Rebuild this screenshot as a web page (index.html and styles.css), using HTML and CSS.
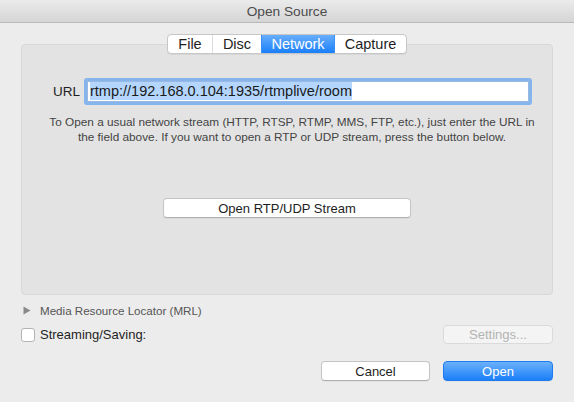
FILE: index.html
```html
<!DOCTYPE html>
<html>
<head>
<meta charset="utf-8">
<link rel="stylesheet" href="styles.css">
</head>
<body>
<div class="window">
  <div class="titlebar">Open Source</div>
  <div class="content">
    <div class="tabs">
      <div class="seg">
        <span class="tab t-file">File</span>
        <span class="tab t-disc">Disc</span>
        <span class="tab t-net active">Network</span>
        <span class="tab t-cap">Capture</span>
      </div>
    </div>
    <div class="panel">
      <div class="url-row">
        <span class="url-label">URL</span>
        <div class="url-field"><span class="sel">rtmp://192.168.0.104:1935/rtmplive/room</span></div>
      </div>
      <p class="desc">To Open a usual network stream (HTTP, RTSP, RTMP, MMS, FTP, etc.), just enter the URL in<br>the field above. If you want to open a RTP or UDP stream, press the button below.</p>
      <div class="rtp-row"><button class="btn rtp">Open RTP/UDP Stream</button></div>
    </div>
    <div class="mrl-row">
      <svg class="tri" width="8" height="9" viewBox="0 0 8 9"><path d="M0.5 0.5 L7.5 4.5 L0.5 8.5 Z" fill="#8a8a8a"/></svg>
      <span class="mrl">Media Resource Locator (MRL)</span>
    </div>
    <div class="stream-row">
      <label class="chk"><span class="box"></span><span>Streaming/Saving:</span></label>
      <button class="btn settings" disabled>Settings...</button>
    </div>
    <div class="actions">
      <button class="btn cancel">Cancel</button>
      <button class="btn open">Open</button>
    </div>
  </div>
</div>
</body>
</html>
```
FILE: styles.css
```css
* { box-sizing: border-box; }
html, body { margin: 0; padding: 0; }
body {
  width: 574px;
  height: 402px;
  overflow: hidden;
  background: #ececec;
  font-family: "Liberation Sans", Arial, sans-serif;
  color: #1e1e1e;
}
.window { width: 574px; height: 402px; display: flex; flex-direction: column; }
.titlebar {
  height: 23px;
  background: linear-gradient(#ebebeb, #d5d5d5);
  border-bottom: 1px solid #b9b9b9;
  text-align: center;
  font-size: 13.7px;
  line-height: 23px;
  color: #4c4c4c;
}
.content { padding: 0 21px; display: flex; flex-direction: column; }
.tabs { margin-top: 11px; display: flex; justify-content: center; position: relative; z-index: 1; }
.seg {
  display: flex;
  height: 20px;
  background: #fff;
  border: 1px solid #c6c6c6;
  border-radius: 4px;
  box-shadow: 0 1px 0 rgba(0,0,0,0.05);
  overflow: hidden;
}
.tab {
  font-size: 14.5px;
  line-height: 18px;
  text-align: center;
  color: #1e1e1e;
  border-left: 1px solid #dcdcdc;
}
.tab:first-child { border-left: none; }
.t-file { width: 44px; }
.t-disc { width: 49px; }
.t-net { width: 73px; }
.t-cap { width: 72px; }
.tab.active {
  background: linear-gradient(#67aefb, #1a7ffa);
  color: #fff;
  border-left-color: #3b8ff9;
}
.tab.active + .tab { border-left-color: #3b8ff9; }
.panel {
  margin-top: -10px;
  height: 251px;
  background: #e3e3e3;
  border: 1px solid #d8d8d8;
  border-radius: 4px;
  padding: 36px 23px 0 31px;
  display: flex;
  flex-direction: column;
}
.url-row { display: flex; align-items: center; gap: 7px; }
.url-label { font-size: 13.5px; color: #1e1e1e; }
.url-field {
  flex: 1;
  height: 21px;
  background: #fff;
  border: 1px solid #9bb9e0;
  box-shadow: 0 0 0 3px #86b5ee;
  border-radius: 1px;
  padding: 0 0 0 2px;
  font-size: 14.5px;
  line-height: 19px;
}
.sel { background: #b4d6fd; color: #1a1a1a; padding: 1px 0; }
.desc {
  margin: 13px 0 0 -10px;
  width: 498px;
  text-align: center;
  font-size: 11.8px;
  line-height: 15px;
  color: #444;
}
.rtp-row { display: flex; justify-content: center; margin-top: 53px; margin-left: -8px; }
.btn {
  font-family: "Liberation Sans", Arial, sans-serif;
  font-size: 13px;
  height: 20px;
  padding: 0;
  border-radius: 4px;
  background: #fff;
  border: 1px solid #c4c4c4;
  border-bottom-color: #b0b0b0;
  color: #1e1e1e;
  box-shadow: 0 1px 0 rgba(0,0,0,0.04);
}
.rtp { width: 248px; }
.mrl-row { display: flex; align-items: center; margin-top: 10px; height: 11px; padding-left: 2px; }
.tri { margin-right: 9px; }
.mrl { font-size: 11.6px; color: #555; }
.stream-row { display: flex; justify-content: space-between; align-items: center; margin-top: 9px; }
.chk { display: flex; align-items: center; gap: 5px; font-size: 13px; color: #1e1e1e; }
.box {
  width: 14px; height: 14px;
  background: #fff;
  border: 1px solid #b5b5b5;
  border-radius: 3px;
}
.settings {
  width: 110px;
  height: 19px;
  background: #f4f4f4;
  border: 1px solid #dadada;
  color: #b3b3b3;
  box-shadow: none;
}
.actions { display: flex; justify-content: flex-end; gap: 13px; margin-top: 17px; }
.cancel { width: 109px; }
.open {
  width: 110px;
  color: #fff;
  border: 1px solid #1c7cf0;
  background: linear-gradient(#6cb1fb, #1b7ff9);
}
```
